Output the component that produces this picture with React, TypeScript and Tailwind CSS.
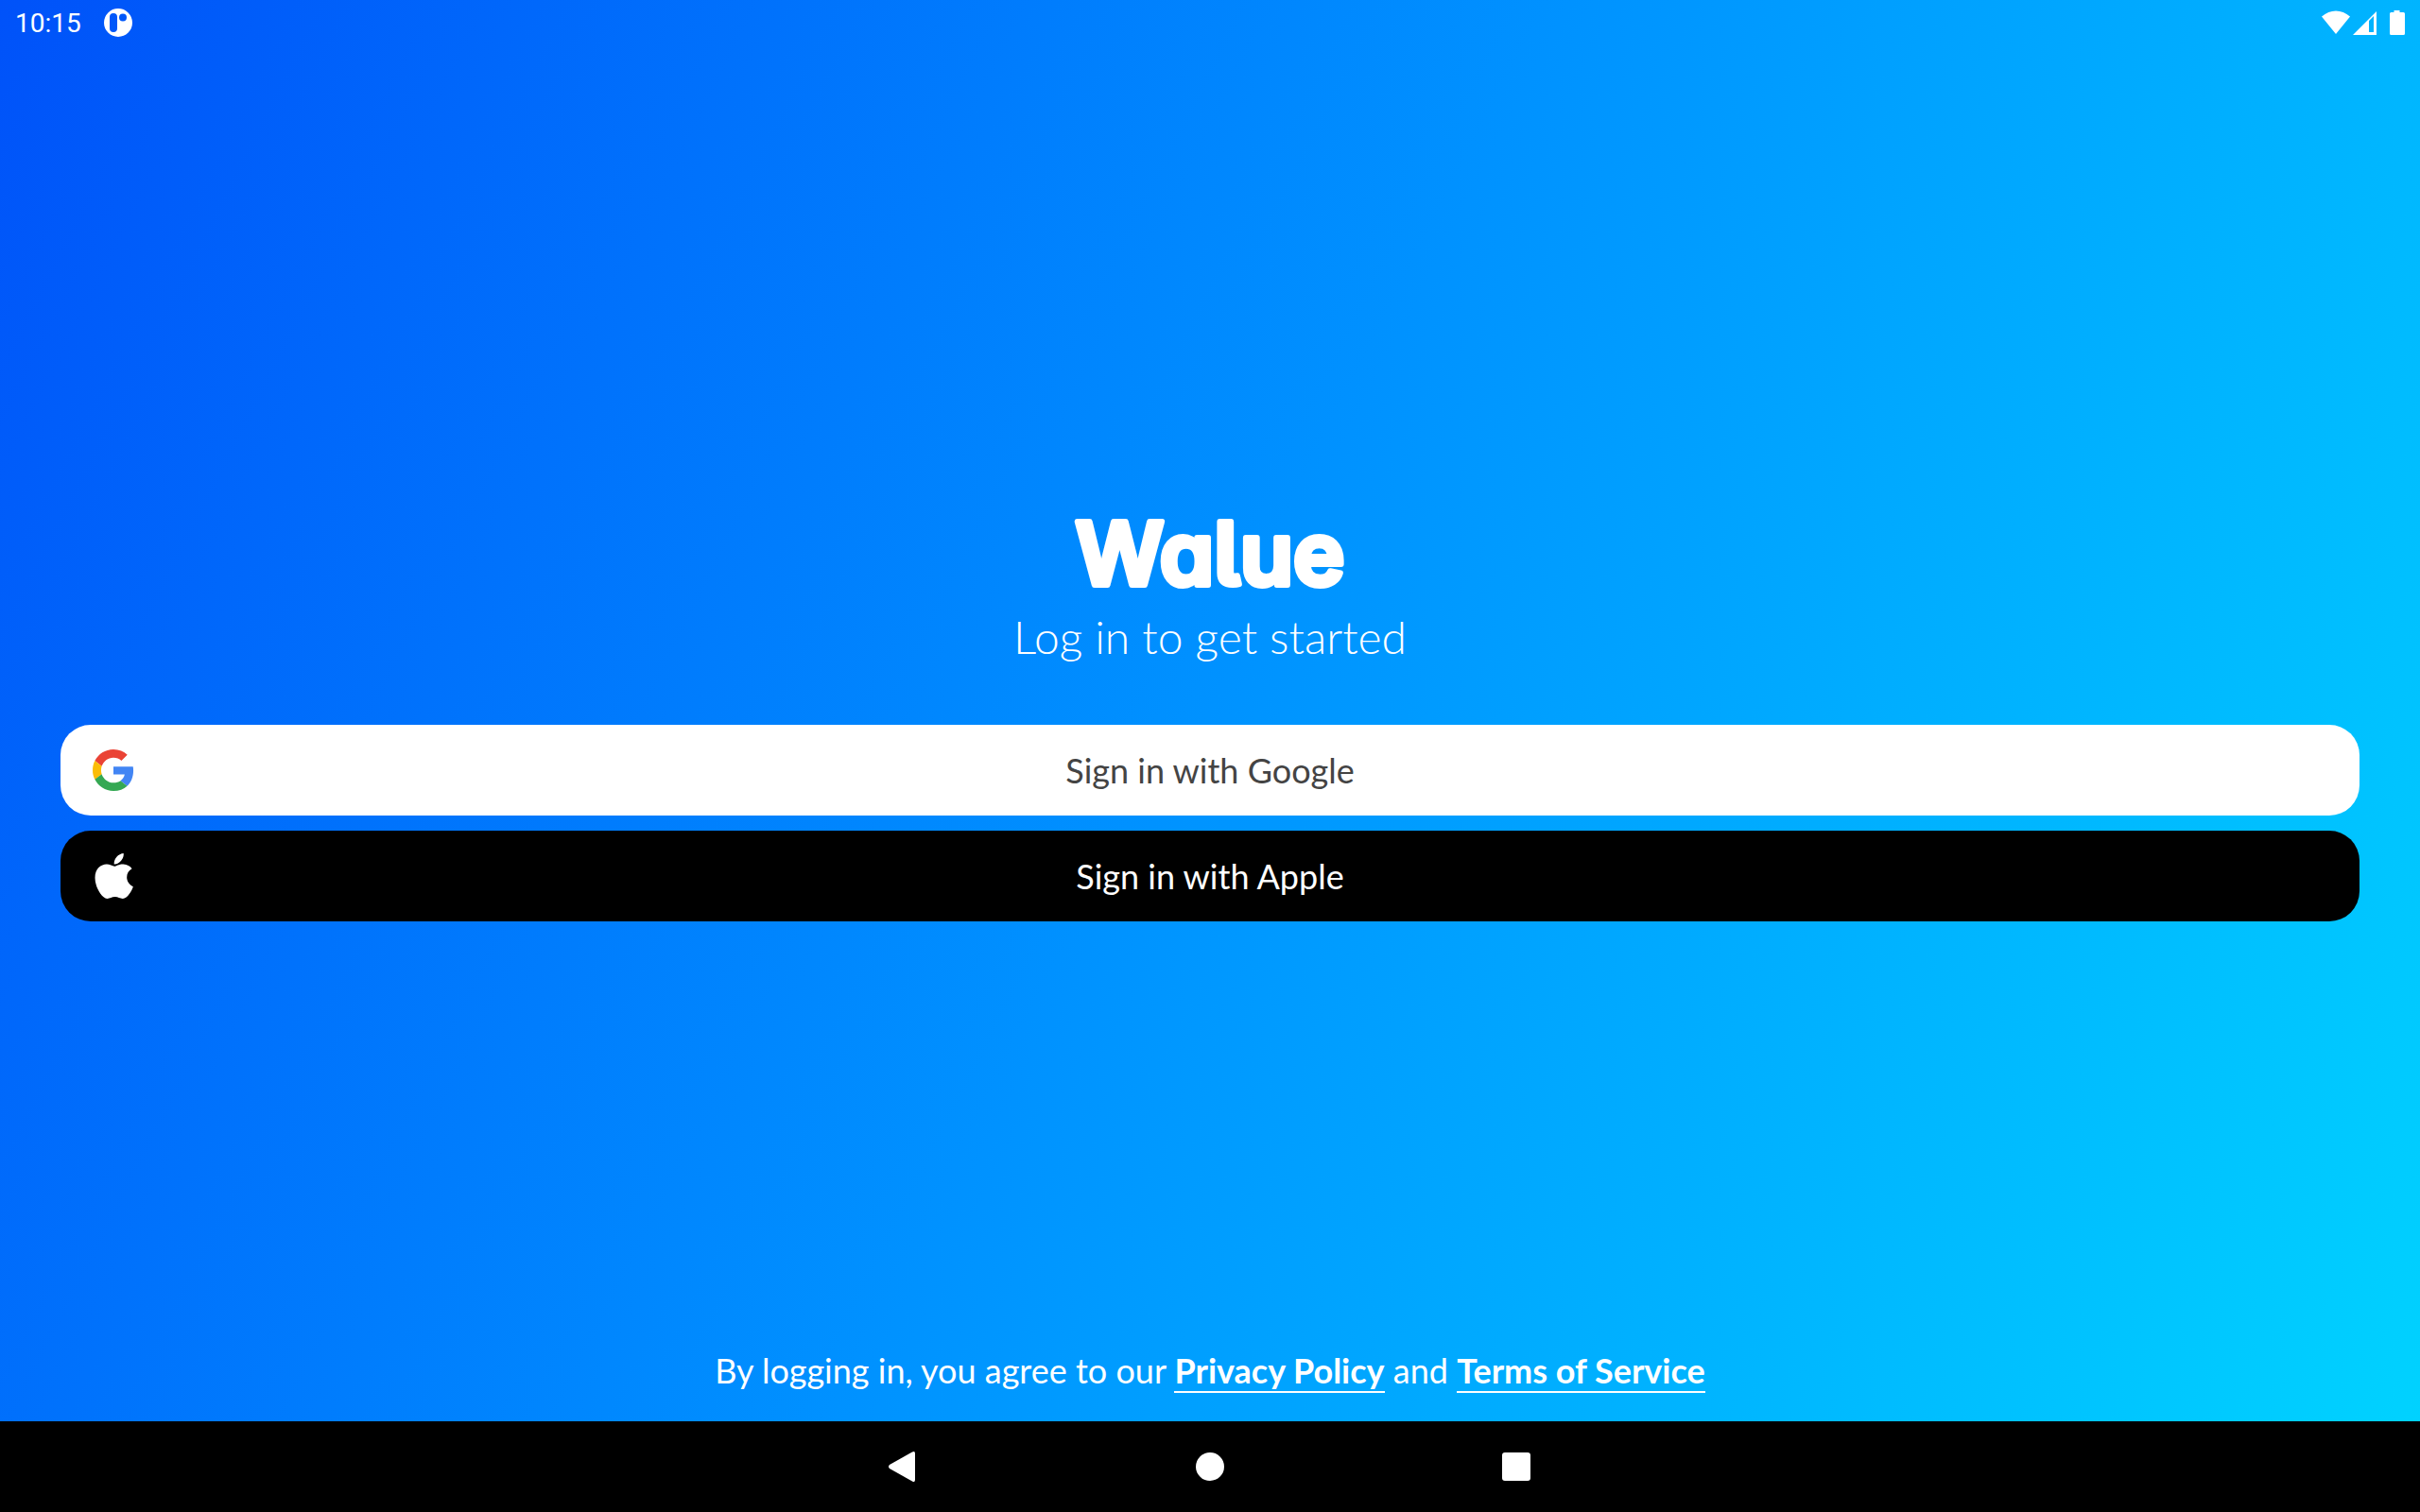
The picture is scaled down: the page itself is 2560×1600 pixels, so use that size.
import type { ReactNode } from "react";

function StatusBar() {
  return (
    <header className="flex h-12 items-center justify-between px-4 text-white">
      <div className="flex items-center gap-6">
        <time className="pt-0.5 font-[Roboto,sans-serif] text-[28px] leading-8">10:15</time>
        <svg viewBox="0 0 30 30" className="size-[30px]" role="img" aria-label="App notification">
          <path
            fill="currentColor"
            fillRule="evenodd"
            d="M15 0a15 15 0 1 1 0 30a15 15 0 1 1 0-30zM10 5a4 4 0 0 0-4 4v12a4 4 0 0 0 8 0v-12a4 4 0 0 0-4-4zM20 5.500a4 4 0 1 0 0 8a4 4 0 1 0 0-8z"
          />
        </svg>
      </div>
      <svg viewBox="0 0 88 28" className="h-7 w-[88px]" fill="currentColor" role="img" aria-label="Wi-Fi, signal and battery">
        <path d="M0 7.500C9 -.5 21 -.5 30 7.500L15 26z" />
        <path fillRule="evenodd" d="M58 2v25H33zM50 12v12h5V7z" />
        <path d="M76.500 1h6v2h4q1.500 0 1.500 1.500v21q0 1.500-1.500 1.500h-13q-1.500 0-1.500-1.500v-21q0-1.500 1.500-1.500h3z" />
      </svg>
    </header>
  );
}

function GoogleIcon() {
  return (
    <svg viewBox="0 0 48 48" className="size-11" aria-hidden="true">
      <path fill="#EA4335" d="M24 9.5c3.540 0 6.710 1.220 9.210 3.600l6.850-6.850C35.900 2.380 30.470 0 24 0 14.620 0 6.510 5.380 2.560 13.220l7.980 6.190C12.430 13.720 17.740 9.500 24 9.500z" />
      <path fill="#4285F4" d="M46.980 24.550c0-1.570-.15-3.090-.38-4.550H24v9.020h12.940c-.58 2.960-2.260 5.480-4.780 7.180l7.730 6c4.510-4.180 7.090-10.360 7.090-17.650z" />
      <path fill="#FBBC05" d="M10.530 28.590c-.48-1.450-.76-2.990-.76-4.590s.27-3.140.76-4.590l-7.980-6.190C.92 16.460 0 20.120 0 24c0 3.880.92 7.540 2.560 10.780l7.970-6.190z" />
      <path fill="#34A853" d="M24 48c6.480 0 11.930-2.130 15.890-5.810l-7.730-6c-2.150 1.450-4.920 2.300-8.160 2.300-6.260 0-11.570-4.220-13.470-9.910l-7.980 6.190C6.510 42.620 14.620 48 24 48z" />
    </svg>
  );
}

function AppleIcon() {
  return (
    <svg viewBox="4 24 364 448" className="h-12 w-11" fill="currentColor" aria-hidden="true">
      <path d="M318.700 260.700c-.2-36.700 16.400-64.400 50-84.800-18.800-26.900-47.200-41.700-84.700-44.600-35.500-2.800-74.300 20.700-88.500 20.700-15 0-49.400-19.700-76.400-19.700C63.300 133.200 4 176.800 4 265.500q0 39.300 14.400 81.200c12.800 36.700 59 126.700 107.200 125.200 25.200-.6 43-17.900 75.800-17.900 31.800 0 48.300 17.900 76.400 17.900 48.600-.7 90.400-82.500 102.600-119.300-65.200-30.700-61.700-90-61.700-91.900zm-56.600-164.200c27.300-32.400 24.800-61.900 24-72.500-24.100 1.400-52 16.400-67.900 34.900-17.500 19.800-27.800 44.300-25.600 71.900 26.100 2 49.900-11.400 69.500-34.300z" />
    </svg>
  );
}

function SignInButton({ icon, label, className }: { icon: ReactNode; label: string; className: string }) {
  return (
    <button
      type="button"
      className={`grid h-24 w-full grid-cols-[44px_1fr_44px] items-center rounded-[32px] px-[34px] text-4xl ${className}`}
    >
      {icon}
      <span>{label}</span>
    </button>
  );
}

function Wordmark() {
  return (
    <h1 className="flex justify-center">
      <svg viewBox="0 0 320 120" className="h-[120px] w-80" role="img" aria-label="Walue">
        <text
          x="160"
          y="94"
          textAnchor="middle"
          className="fill-white stroke-white stroke-[6px] font-[Inter,sans-serif] text-[92px] font-semibold [font-feature-settings:'cv11','cv05'] [stroke-linejoin:round]"
        >
          Walue
        </text>
      </svg>
    </h1>
  );
}

function NavigationBar() {
  return (
    <nav className="flex h-24 items-center justify-center gap-[276px] bg-black text-white">
      <button type="button" aria-label="Back" className="flex size-12 items-center justify-center">
        <svg viewBox="0 0 32 32" className="size-8" fill="currentColor" aria-hidden="true">
          <path d="M25 .5Q28 -1 28 2V30Q28 33 25 31.500L1 18Q-1 16 1 14z" />
        </svg>
      </button>
      <button type="button" aria-label="Home" className="flex size-12 items-center justify-center">
        <span className="size-[30px] rounded-full bg-white" />
      </button>
      <button type="button" aria-label="Recent apps" className="flex size-12 items-center justify-center">
        <span className="size-[30px] rounded-[3px] bg-white" />
      </button>
    </nav>
  );
}

const linkClass = "border-b-2 border-white font-bold leading-none";

export default function App() {
  return (
    <div className="flex min-h-screen flex-col font-[Lato,sans-serif]">
      <div className="flex grow flex-col bg-[linear-gradient(117deg,#0052f9,#0092ff_50%,#00d2ff)]">
        <StatusBar />
        <main className="flex grow flex-col justify-center px-16 pt-6">
          <Wordmark />
          <p className="text-center text-5xl leading-[58px] font-light text-white">Log in to get started</p>
          <div className="mt-16 flex flex-col gap-4">
            <SignInButton icon={<GoogleIcon />} label="Sign in with Google" className="bg-white text-[#444444]" />
            <SignInButton icon={<AppleIcon />} label="Sign in with Apple" className="bg-black text-white" />
          </div>
        </main>
        <footer className="pb-8 text-center text-4xl leading-[44px] text-white">
          By logging in, you agree to our{" "}
          <a href="#privacy" className={linkClass}>Privacy Policy</a> and{" "}
          <a href="#terms" className={linkClass}>Terms of Service</a>
        </footer>
      </div>
      <NavigationBar />
    </div>
  );
}
